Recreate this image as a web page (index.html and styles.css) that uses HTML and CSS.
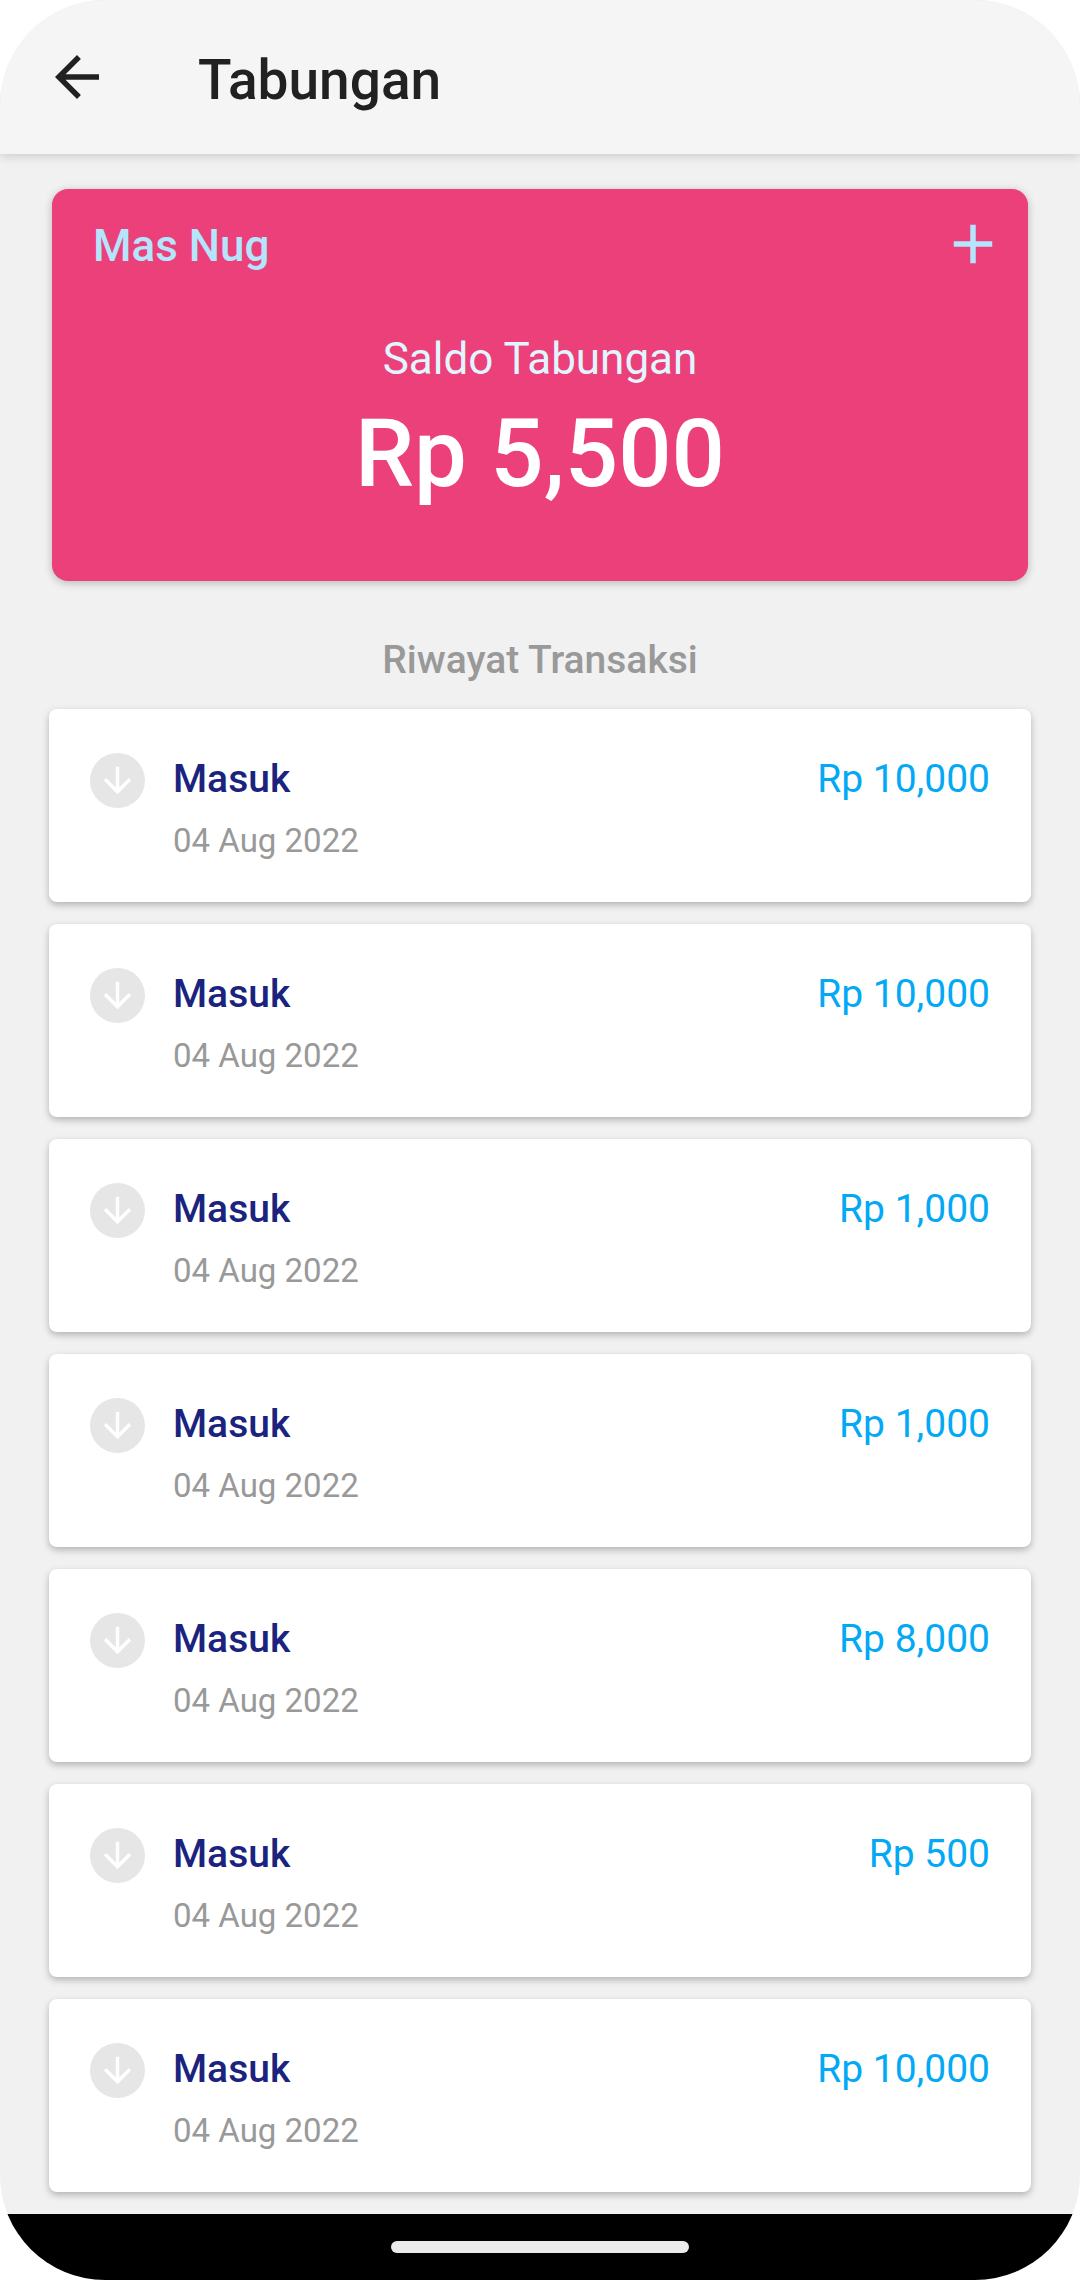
FILE: index.html
```html
<!DOCTYPE html>
<html lang="id">
<head>
  <meta charset="UTF-8" />
  <meta name="viewport" content="width=device-width, initial-scale=1.0" />
  <title>Tabungan</title>
  <link rel="stylesheet" href="styles.css">
</head>
<body>
<svg class="sprite" aria-hidden="true">
  <symbol id="arrow-down" viewBox="0 0 24 24">
    <path d="M20 12l-1.41-1.41L13 16.17V4h-2v12.17l-5.58-5.59L4 12l8 8 8-8z" />
  </symbol>
</svg>
<div class="screen">
  <header class="app-bar">
    <button class="icon-button" type="button" aria-label="Kembali">
      <svg viewBox="0 0 24 24"><path d="M20 11H7.83l5.59-5.59L12 4l-8 8 8 8 1.41-1.41L7.83 13H20v-2z" /></svg>
    </button>
    <h1>Tabungan</h1>
  </header>

  <main>
    <section class="balance-card">
      <div class="balance-header">
        <h2>Mas Nug</h2>
        <button class="icon-button" type="button" aria-label="Tambah">
          <svg viewBox="0 0 24 24"><path d="M19 13h-6v6h-2v-6H5v-2h6V5h2v6h6v2z" /></svg>
        </button>
      </div>
      <p class="balance-label">Saldo Tabungan</p>
      <p class="balance-amount">Rp 5,500</p>
    </section>

    <h2 class="history-title">Riwayat Transaksi</h2>
    <ul class="history">
      <li class="transaction">
        <span class="badge"><svg><use href="#arrow-down" /></svg></span>
        <div class="details">
          <h3>Masuk</h3>
          <p>04 Aug 2022</p>
        </div>
        <span class="amount">Rp 10,000</span>
      </li>
      <li class="transaction">
        <span class="badge"><svg><use href="#arrow-down" /></svg></span>
        <div class="details">
          <h3>Masuk</h3>
          <p>04 Aug 2022</p>
        </div>
        <span class="amount">Rp 10,000</span>
      </li>
      <li class="transaction">
        <span class="badge"><svg><use href="#arrow-down" /></svg></span>
        <div class="details">
          <h3>Masuk</h3>
          <p>04 Aug 2022</p>
        </div>
        <span class="amount">Rp 1,000</span>
      </li>
      <li class="transaction">
        <span class="badge"><svg><use href="#arrow-down" /></svg></span>
        <div class="details">
          <h3>Masuk</h3>
          <p>04 Aug 2022</p>
        </div>
        <span class="amount">Rp 1,000</span>
      </li>
      <li class="transaction">
        <span class="badge"><svg><use href="#arrow-down" /></svg></span>
        <div class="details">
          <h3>Masuk</h3>
          <p>04 Aug 2022</p>
        </div>
        <span class="amount">Rp 8,000</span>
      </li>
      <li class="transaction">
        <span class="badge"><svg><use href="#arrow-down" /></svg></span>
        <div class="details">
          <h3>Masuk</h3>
          <p>04 Aug 2022</p>
        </div>
        <span class="amount">Rp 500</span>
      </li>
      <li class="transaction">
        <span class="badge"><svg><use href="#arrow-down" /></svg></span>
        <div class="details">
          <h3>Masuk</h3>
          <p>04 Aug 2022</p>
        </div>
        <span class="amount">Rp 10,000</span>
      </li>
    </ul>
  </main>

  <div class="nav-bar">
    <div class="nav-handle"></div>
  </div>
</div>
</body>
</html>
```

FILE: styles.css
```css
* {
  box-sizing: border-box;
}
body {
  margin: 0;
  background: #fff;
  font-family: Roboto, "Liberation Sans", sans-serif;
}
h1, h2, h3, p, ul {
  margin: 0;
  padding: 0;
}
h1, h2, h3 {
  font-weight: 500;
}
.sprite {
  display: none;
}
.screen {
  display: flex;
  flex-direction: column;
  min-height: 100vh;
  background: #f1f1f1;
  border-radius: 105px;
  overflow: hidden;
}

/* app bar */
.app-bar {
  display: flex;
  align-items: flex-start;
  gap: 88px;
  padding: 44px 44px 38px;
  background: #f5f5f5;
  box-shadow: 0 2px 10px rgba(0,0,0,0.16);
  color: #212121;
}
.app-bar h1 {
  font-size: 55px;
  line-height: 72px;
}
.icon-button {
  width: 66px;
  height: 66px;
  padding: 0;
  border: none;
  background: none;
  color: inherit;
  cursor: pointer;
}
.icon-button svg {
  display: block;
  width: 66px;
  height: 66px;
  fill: currentColor;
}

/* balance */
.balance-card {
  margin: 35px 52px 0;
  padding: 22px 0 72px;
  background: #ec407a;
  border-radius: 16px;
  box-shadow: 0 2px 8px rgba(0,0,0,0.24);
  text-align: center;
}
.balance-header {
  display: flex;
  justify-content: space-between;
  align-items: flex-start;
  padding: 0 22px 0 41px;
  color: #b3e5fc;
}
.balance-header h2 {
  font-size: 44px;
  line-height: 70px;
}
.balance-label {
  margin-top: 52px;
  font-size: 44px;
  line-height: 52px;
  color: #e1f5fe;
}
.balance-amount {
  margin-top: 14px;
  font-size: 94px;
  font-weight: 500;
  line-height: 110px;
  color: #fff;
}

/* transactions */
.history-title {
  margin: 56px 0 26px;
  font-size: 39px;
  line-height: 46px;
  text-align: center;
  color: #999;
}
.history {
  display: flex;
  flex-direction: column;
  gap: 22px;
  margin: 0 49px 22px;
  list-style: none;
}
.transaction {
  display: flex;
  align-items: flex-start;
  padding: 44px 41px 41px;
  background: #fff;
  border-radius: 8px;
  box-shadow: 0 3px 7px rgba(0,0,0,0.26);
}
.badge {
  display: flex;
  justify-content: center;
  align-items: center;
  width: 55px;
  height: 55px;
  margin-right: 28px;
  background: #e6e6e6;
  border-radius: 50%;
}
.badge svg {
  width: 41px;
  height: 41px;
  fill: #fff;
}
.details {
  flex: 1;
}
.details h3 {
  font-size: 39px;
  line-height: 52px;
  color: #1a237e;
}
.details p {
  margin-top: 16px;
  font-size: 33px;
  line-height: 40px;
  color: #999;
}
.amount {
  font-size: 39px;
  line-height: 52px;
  color: #03a9f4;
}

/* system navigation */
.nav-bar {
  display: flex;
  justify-content: center;
  align-items: center;
  height: 66px;
  margin-top: auto;
  background: #000;
}
.nav-handle {
  width: 298px;
  height: 12px;
  background: #ebebeb;
  border-radius: 6px;
}
```
